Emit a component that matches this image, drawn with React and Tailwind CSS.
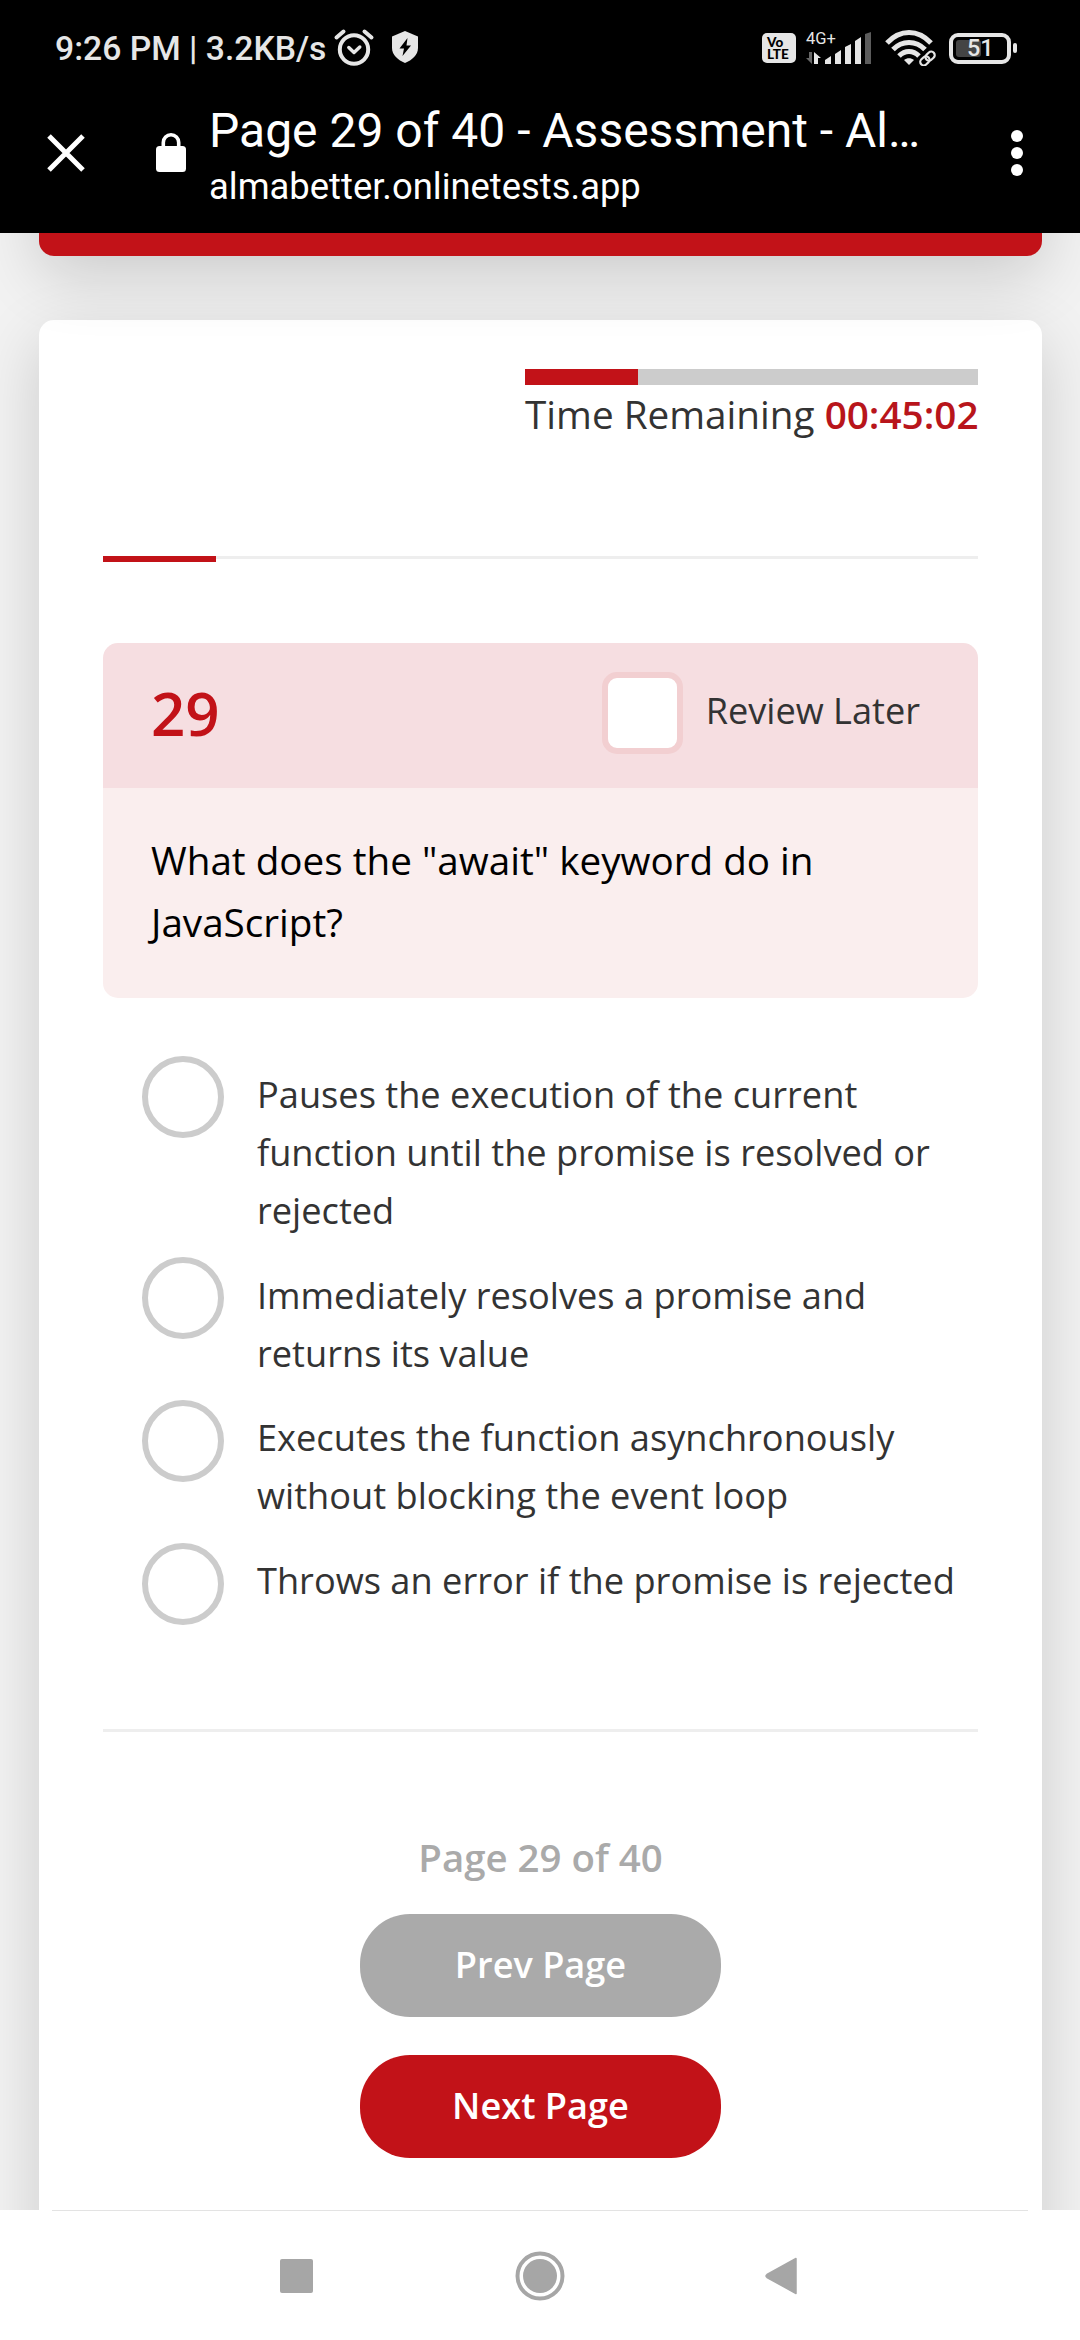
const STATUS = "#e6e6e6";

function StatusBar() {
  return (
    <div className="flex h-24 shrink-0 items-center bg-black pl-[55px] pr-[63px] text-[#e6e6e6]">
      <span className="mt-px whitespace-nowrap text-[33.7px] font-medium leading-[40px]">9:26 PM | 3.2KB/s</span>
      <svg className="ml-[7px] -mt-px h-[40px] w-[42px]" viewBox="0 0 42 40" fill="none" stroke={STATUS} strokeLinecap="round">
        <circle cx="21" cy="21.5" r="14.2" strokeWidth="4" />
        <path d="M3.500 9.500 10.500 3.500M38.500 9.500 31.500 3.500" strokeWidth="4" />
        <path d="M15.800 19.500 21 24.500 26.800 19" strokeWidth="3.400" strokeLinejoin="round" />
      </svg>
      <svg className="ml-[16px] -mt-[2px] h-[32px] w-[28px]" viewBox="0 0 28 32">
        <path d="M14 0 27 5.500V17C27 24 21 29 14 32 7 29 1 24 1 17V5.500Z" fill={STATUS} />
        <path d="M16.500 7 8.500 17.500H13L11.500 25 20 14.500H15.500Z" fill="black" />
      </svg>
      <div className="ml-auto flex items-center">
        <div className="flex h-[30px] w-[34px] flex-col items-start justify-center rounded-[5px] bg-[#e6e6e6] pl-[5px] font-['Lato',sans-serif] text-[13.500px] font-black leading-[12.500px] text-black">
          <span>Vo</span>
          <span>LTE</span>
        </div>
        <div className="relative ml-[9px] h-[34px] w-[67px]">
          <span className="absolute left-[1px] top-0 text-[16.500px] leading-[15px]">4G+</span>
          <svg className="h-[34px] w-[67px]" viewBox="0 0 67 34">
            <path d="M7 21V33L1 27H4V21Z" fill="#666" />
            <path d="M9 33V21L16 27H13V33Z" fill={STATUS} />
            <path d="M20 29 26 25V33H20Z" fill={STATUS} />
            <path d="M30 23 36 19V33H30Z" fill={STATUS} />
            <path d="M40 16 46 13V33H40Z" fill={STATUS} />
            <path d="M50 10 56 6V33H50Z" fill={STATUS} />
            <path d="M60 3 66 1V33H60Z" fill="#5c5c5c" />
          </svg>
        </div>
        <svg className="ml-[13px] h-[36px] w-[52px]" viewBox="0 0 52 36" fill="none" stroke={STATUS}>
          <path d="M2 13C15 -1 33 -1 46 13" strokeWidth="5" />
          <path d="M8 19.500C17 10 31 10 40 19.500" strokeWidth="5" />
          <path d="M14 26C20 20 28 20 34 26" strokeWidth="5" />
          <path d="M19 30C22 27.500 26 27.500 29 30L24 35Z" fill={STATUS} stroke="none" />
          <g transform="rotate(-42 42.500 28.500)">
            <rect x="33" y="23.500" width="19" height="10" rx="5" fill="black" stroke="black" strokeWidth="3" />
            <rect x="34" y="25" width="10" height="7" rx="3.500" strokeWidth="2.200" />
            <rect x="41" y="25" width="10" height="7" rx="3.500" strokeWidth="2.200" />
          </g>
        </svg>
        <div className="ml-[12px] flex items-center">
          <div className="flex h-[31px] w-[62px] items-center rounded-[9px] border-4 border-[#e6e6e6] pl-[3px]">
            <div className="flex h-[17px] w-[25px] items-center rounded-[3px] bg-[#444] pl-[11px]">
              <span className="mt-[2px] text-[23.500px] font-medium leading-none">51</span>
            </div>
          </div>
          <div className="ml-[2px] h-[10px] w-[4px] rounded-[2px] bg-[#e6e6e6]" />
        </div>
      </div>
    </div>
  );
}

function BrowserBar() {
  return (
    <div className="flex h-[137px] shrink-0 items-start bg-black text-white">
      <svg className="ml-[46px] mt-[37px] h-10 w-10" viewBox="0 0 40 40" stroke="white" strokeWidth="5">
        <path d="M3 3 37 37M37 3 3 37" />
      </svg>
      <svg className="ml-[70px] mt-[37px] h-[39px] w-[30px]" viewBox="0 0 30 39">
        <path d="M7.300 15V9.500a7.700 7.700 0 0 1 15.400 0V15" fill="none" stroke="white" strokeWidth="3.600" />
        <rect y="13" width="30" height="26" rx="3.500" fill="white" />
      </svg>
      <div className="ml-[23px] mt-[7px] whitespace-nowrap">
        <div className="text-[48px] leading-[56px]">Page 29 of 40 - Assessment - Al…</div>
        <div className="text-[36.400px] leading-[56px]">almabetter.onlinetests.app</div>
      </div>
      <div className="ml-auto mr-[57px] mt-[34px] flex flex-col gap-[5px]">
        <div className="size-3 rounded-full bg-white" />
        <div className="size-3 rounded-full bg-white" />
        <div className="size-3 rounded-full bg-white" />
      </div>
    </div>
  );
}

const OPTIONS = [
  ["Pauses the execution of the current", "function until the promise is resolved or", "rejected"],
  ["Immediately resolves a promise and", "returns its value"],
  ["Executes the function asynchronously", "without blocking the event loop"],
  ["Throws an error if the promise is rejected"],
];

function Question() {
  return (
    <section className="mt-[81px] overflow-hidden rounded-[15px]">
      <div className="flex h-[145px] items-start bg-[#f6dee1] pl-[48px] pt-[29px]">
        <span className="text-[60px] font-semibold leading-[82px] text-[#c21218]">29</span>
        <div className="ml-auto h-[82px] w-[81px] rounded-[15px] border-[6px] border-[#f2cfd1] bg-white" />
        <span className="ml-[23px] mr-[58px] mt-[13px] text-[36.150px] leading-[50px] text-[#333]">Review Later</span>
      </div>
      <div className="h-[210px] bg-[#faeeee] pl-[48px] pt-[41px] text-[38.650px] leading-[62px] text-black">
        <div>What does the "await" keyword do in</div>
        <div>JavaScript?</div>
      </div>
    </section>
  );
}

function NavBar() {
  return (
    <nav className="flex h-[130px] shrink-0 justify-center bg-white px-[52px]">
      <div className="flex w-full items-center justify-center border-t border-[#e3e3e3]">
        <div className="flex w-[520px] items-center justify-between pr-[3px]">
          <div className="h-[34px] w-[33px] rounded-[2px] bg-[#a6a6a6]" />
          <svg className="ml-[3px] h-[50px] w-[50px]" viewBox="0 0 50 50">
            <circle cx="25" cy="25" r="22.500" fill="none" stroke="#a6a6a6" strokeWidth="4" />
            <circle cx="25" cy="25" r="17" fill="#a6a6a6" />
          </svg>
          <svg className="h-[38px] w-[33px]" viewBox="0 0 33 38">
            <path d="M32 1.500V36.500L3 20.500Q1 19 3 17.500Z" fill="#a6a6a6" stroke="#a6a6a6" strokeLinejoin="round" strokeWidth="1.500" />
          </svg>
        </div>
      </div>
    </nav>
  );
}

export default function App() {
  return (
    <div className="flex h-[2340px] w-[1080px] flex-col overflow-hidden bg-white font-['Roboto',sans-serif]">
      <StatusBar />
      <BrowserBar />
      <main className="h-[1977px] shrink-0 overflow-hidden bg-[#f2f2f2] pl-[39px] pr-[38px] font-['Open_Sans',sans-serif]">
        <div className="relative -mt-[200px] h-[223px] rounded-[15px] bg-[#c21218] shadow-[0_20px_64px_rgba(0,0,0,0.16)]" />
        <div className="mt-[64px] h-[2100px] rounded-[15px] bg-white pl-[64px] pr-[64px] pt-[49px] shadow-[0_20px_64px_rgba(0,0,0,0.16)]">
          <div className="ml-auto w-[453px]">
            <div className="h-[16px] bg-[#ccc]">
              <div className="h-full w-[113px] bg-[#c21218]" />
            </div>
            <div className="mt-[2px] whitespace-nowrap text-[38.700px] leading-[54px] text-[#333]">
              Time Remaining <span className="font-semibold text-[#b8151b]">00:45:02</span>
            </div>
          </div>
          <div className="mt-[115px] h-[6px]">
            <div className="h-[3px] bg-[#eee]">
              <div className="h-[6px] w-[113px] bg-[#c21218]" />
            </div>
          </div>
          <Question />
          <div className="mt-[58px] flex flex-col gap-[27px] pl-[39px]">
            {OPTIONS.map((lines, index) => (
              <div key={lines[0]} className="flex items-start">
                <div className="-mb-[24px] size-[82px] shrink-0 rounded-full border-[6px] border-[#ccc]" />
                <div
                  className={
                    (index > 1 ? "mt-[8px] -mb-[8px]" : "mt-[9px] -mb-[9px]") +
                    " ml-[33px] whitespace-nowrap text-[36.200px] leading-[58px] text-[#333]"
                  }
                >
                  {lines.map((line) => (
                    <div key={line}>{line}</div>
                  ))}
                </div>
              </div>
            ))}
          </div>
          <div className="mt-[128px] h-[3px] bg-[#eee]" />
          <div className="mt-[97px] flex flex-col items-center font-semibold">
            <div className="text-[38.400px] leading-[56px] text-[#aaa]">Page 29 of 40</div>
            <button className="mt-[29px] h-[103px] w-[361px] rounded-[50px] bg-[#aaa] pb-[2px] text-[36.150px] text-white">Prev Page</button>
            <button className="mt-[38px] h-[103px] w-[361px] rounded-[50px] bg-[#c21218] pb-[2px] text-[36.150px] text-white">Next Page</button>
          </div>
        </div>
      </main>
      <NavBar />
    </div>
  );
}
